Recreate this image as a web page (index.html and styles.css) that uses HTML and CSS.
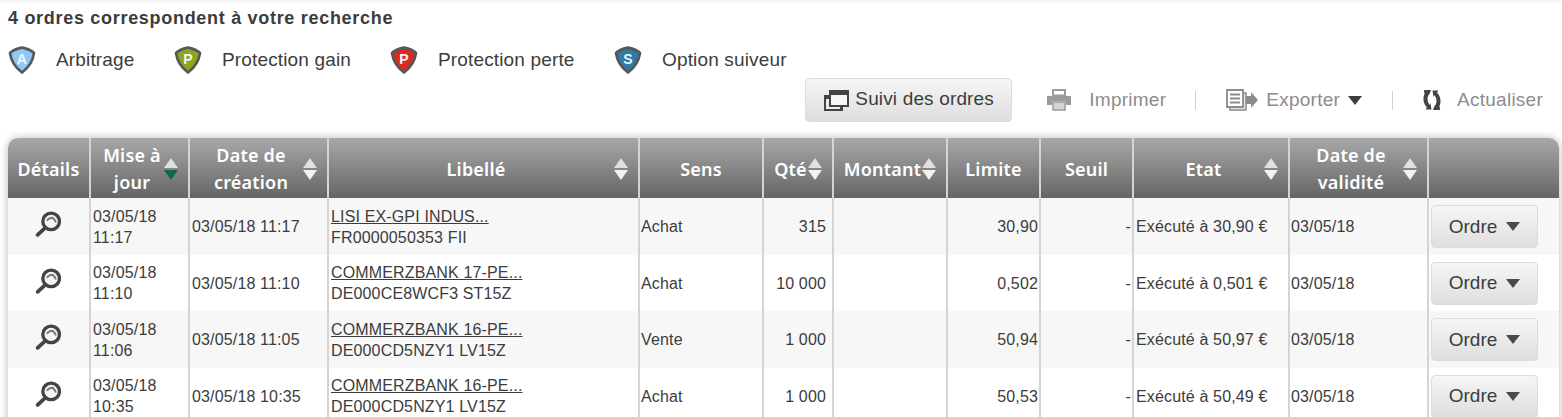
FILE: index.html
```html
<!DOCTYPE html>
<html lang="fr">
<head>
<meta charset="utf-8">
<title>Ordres</title>
<link rel="stylesheet" href="styles.css">
</head>
<body>
<svg class="defs" width="0" height="0" aria-hidden="true">
  <defs>
    <path id="shield" d="M2 8 C6 4 10 3.500 14 2.500 C18 3.500 22 4 26 8 C25 16 20 23 14 27.500 C8 23 3 16 2 8 Z"/>
    <g id="loupe">
      <circle cx="16.500" cy="10" r="8" fill="#f4f4f4" stroke="#444" stroke-width="3.200"/>
      <path d="M11 16 L3.500 23" fill="none" stroke="#444" stroke-width="3.600" stroke-linecap="round"/>
      <path d="M12.500 9.500 C13.500 7.500 15.500 6.500 18 6.500 C19.500 8 20.500 9 21 11" fill="none" stroke="#777" stroke-width="1.800"/>
    </g>
  </defs>
</svg>
<h1 class="title">4 ordres correspondent à votre recherche</h1>
<ul class="legend">
  <li class="legend-item">
    <svg class="shield" viewBox="0 0 28 30"><use href="#shield" fill="#8fc8f5" stroke="#55585c" stroke-width="2.600"/><text x="14" y="19" class="shield-letter">A</text></svg>
    <span>Arbitrage</span>
  </li>
  <li class="legend-item">
    <svg class="shield" viewBox="0 0 28 30"><use href="#shield" fill="#8aa81e" stroke="#55585c" stroke-width="2.600"/><text x="14" y="19" class="shield-letter">P</text></svg>
    <span>Protection gain</span>
  </li>
  <li class="legend-item">
    <svg class="shield" viewBox="0 0 28 30"><use href="#shield" fill="#dd2a20" stroke="#55585c" stroke-width="2.600"/><text x="14" y="19" class="shield-letter">P</text></svg>
    <span>Protection perte</span>
  </li>
  <li class="legend-item">
    <svg class="shield" viewBox="0 0 28 30"><use href="#shield" fill="#2f7ba6" stroke="#55585c" stroke-width="2.600"/><text x="14" y="19" class="shield-letter">S</text></svg>
    <span>Option suiveur</span>
  </li>
</ul>
<div class="toolbar">
  <button class="btn btn-track">
    <svg class="ico-track" viewBox="0 0 25 21"><rect x="0" y="5" width="19" height="16" fill="#444"/><rect x="2" y="9" width="14" height="10" fill="#ececec"/><rect x="5" y="0" width="20" height="17" fill="#444"/><rect x="7" y="5" width="16" height="10" fill="#f6f6f6"/></svg>
    Suivi des ordres
  </button>
  <span class="tool tool-print">
    <svg class="ico-print" viewBox="0 0 26 22"><path d="M7 1 H19 V6.500 H7 Z" fill="none" stroke="#9a9a9a" stroke-width="2"/><path d="M1 7 H25 V16 H20 V12 H6 V16 H1 Z" fill="#9a9a9a"/><path d="M7 13 H19 V21 H7 Z" fill="#d4d4d4" stroke="#9a9a9a" stroke-width="1.500"/></svg>
    <span>Imprimer</span>
  </span>
  <span class="sep sep-first"></span>
  <span class="tool tool-export">
    <svg class="ico-export" viewBox="0 0 32 22"><path d="M4 4 H20 V21 H4 Z" fill="#e4e4e4" stroke="#8c8c8c" stroke-width="1.500"/><path d="M1 1 H17 V18 H1 Z" fill="#fff" stroke="#8c8c8c" stroke-width="1.800"/><path d="M4 5.500 H14 M4 9.500 H14 M4 13.500 H14" stroke="#8c8c8c" stroke-width="1.800"/><path d="M20 7 H25 V3 L32 11 L25 19 V15 H20 Z" fill="#8c8c8c"/></svg>
    <span>Exporter</span><i class="caret"></i>
  </span>
  <span class="sep sep-last"></span>
  <span class="tool tool-refresh">
    <svg class="ico-refresh" viewBox="0 0 20 22"><path d="M2 1 L9 1 L8 4 L6 7 C5 10 5.500 13 7.500 16 L8.500 14 L9.500 20.500 L3.500 20.500 L5 18.500 C1.500 15 0.500 9 2.500 5 Z" fill="#444"/><path d="M18 21 L11 21 L12 18 L14 15 C15 12 14.500 9 12.500 6 L11.500 8 L10.500 1.500 L16.500 1.500 L15 3.500 C18.500 7 19.500 13 17.500 17 Z" fill="#444"/></svg>
    <span>Actualiser</span>
  </span>
</div>
<div class="table-wrap">
<table class="orders">
  <colgroup>
    <col class="c1"><col class="c2"><col class="c3"><col class="c4"><col class="c5"><col class="c6"><col class="c7"><col class="c8"><col class="c9"><col class="c10"><col class="c11"><col class="c12">
  </colgroup>
  <thead>
    <tr>
      <th><div class="th"><span class="th-l">Détails</span></div></th>
      <th><div class="th"><span class="th-l">Mise à jour</span><i class="sort sort-active"></i></div></th>
      <th><div class="th"><span class="th-l">Date de création</span><i class="sort"></i></div></th>
      <th><div class="th"><span class="th-l">Libellé</span><i class="sort"></i></div></th>
      <th><div class="th"><span class="th-l">Sens</span></div></th>
      <th><div class="th"><span class="th-l">Qté</span><i class="sort"></i></div></th>
      <th><div class="th"><span class="th-l">Montant</span><i class="sort"></i></div></th>
      <th><div class="th"><span class="th-l">Limite</span></div></th>
      <th><div class="th"><span class="th-l">Seuil</span></div></th>
      <th><div class="th"><span class="th-l">Etat</span><i class="sort"></i></div></th>
      <th><div class="th"><span class="th-l">Date de validité</span><i class="sort"></i></div></th>
      <th></th>
    </tr>
  </thead>
  <tbody>
    <tr>
      <td class="ctr"><svg class="loupe" viewBox="0 0 26 26"><use href="#loupe"/></svg></td>
      <td>03/05/18<br>11:17</td>
      <td>03/05/18 11:17</td>
      <td><a class="lnk">LISI EX-GPI INDUS...</a><br>FR0000050353 FII</td>
      <td class="tight">Achat</td>
      <td class="num qty">315</td>
      <td class="num"></td>
      <td class="num">30,90</td>
      <td class="num">-</td>
      <td>Exécuté à 30,90 €</td>
      <td class="tight">03/05/18</td>
      <td><button class="btn btn-ordre">Ordre<i class="caret caret-dark"></i></button></td>
    </tr>
    <tr>
      <td class="ctr"><svg class="loupe" viewBox="0 0 26 26"><use href="#loupe"/></svg></td>
      <td>03/05/18<br>11:10</td>
      <td>03/05/18 11:10</td>
      <td><a class="lnk">COMMERZBANK 17-PE...</a><br>DE000CE8WCF3 ST15Z</td>
      <td class="tight">Achat</td>
      <td class="num qty">10 000</td>
      <td class="num"></td>
      <td class="num">0,502</td>
      <td class="num">-</td>
      <td>Exécuté à 0,501 €</td>
      <td class="tight">03/05/18</td>
      <td><button class="btn btn-ordre">Ordre<i class="caret caret-dark"></i></button></td>
    </tr>
    <tr>
      <td class="ctr"><svg class="loupe" viewBox="0 0 26 26"><use href="#loupe"/></svg></td>
      <td>03/05/18<br>11:06</td>
      <td>03/05/18 11:05</td>
      <td><a class="lnk">COMMERZBANK 16-PE...</a><br>DE000CD5NZY1 LV15Z</td>
      <td class="tight">Vente</td>
      <td class="num qty">1 000</td>
      <td class="num"></td>
      <td class="num">50,94</td>
      <td class="num">-</td>
      <td>Exécuté à 50,97 €</td>
      <td class="tight">03/05/18</td>
      <td><button class="btn btn-ordre">Ordre<i class="caret caret-dark"></i></button></td>
    </tr>
    <tr>
      <td class="ctr"><svg class="loupe" viewBox="0 0 26 26"><use href="#loupe"/></svg></td>
      <td>03/05/18<br>10:35</td>
      <td>03/05/18 10:35</td>
      <td><a class="lnk">COMMERZBANK 16-PE...</a><br>DE000CD5NZY1 LV15Z</td>
      <td class="tight">Achat</td>
      <td class="num qty">1 000</td>
      <td class="num"></td>
      <td class="num">50,53</td>
      <td class="num">-</td>
      <td>Exécuté à 50,49 €</td>
      <td class="tight">03/05/18</td>
      <td><button class="btn btn-ordre">Ordre<i class="caret caret-dark"></i></button></td>
    </tr>
  </tbody>
</table>
</div>
</body>
</html>
```
FILE: styles.css
```css
html, body { margin: 0; padding: 0; height: 417px; overflow: hidden; background: #fff; }
body {
  font-family: "Liberation Sans", Arial, sans-serif;
  color: #3c3c3c;
  padding: 0 3px 0 8px;
  box-sizing: border-box;
  width: 1562px;
  background: linear-gradient(#f5f5f5, #fff 4px);
}
.defs { position: absolute; }
.title { margin: 0; padding-top: 9px; font-size: 18px; line-height: 18px; font-weight: 700; letter-spacing: .7px; color: #3c3c3c; }
.legend { list-style: none; margin: 0; padding: 0; display: flex; margin-top: 18px; height: 30px; align-items: center; }
.legend-item { display: flex; align-items: center; font-size: 19px; letter-spacing: .15px; }
.legend-item:nth-child(1) { width: 166px; }
.legend-item:nth-child(2) { width: 216px; }
.legend-item:nth-child(3) { width: 224px; }
.shield { width: 28px; height: 30px; margin-right: 20px; flex: none; }
.shield-letter { font: 700 14px "Liberation Sans", sans-serif; fill: #eef5fa; text-anchor: middle; }
.toolbar { display: flex; align-items: center; justify-content: flex-end; height: 44px; margin-top: 3px; padding-right: 16px; }
.btn { font-family: inherit; color: #3c3c3c; border: 1px solid #dcdcdc; border-radius: 4px; background: linear-gradient(#f6f6f6, #dedede); cursor: pointer; }
.btn-track { height: 44px; width: 207px; font-size: 19px; letter-spacing: .15px; display: flex; align-items: center; padding: 0 0 2px 18px; margin-right: 34px; }
.ico-track { width: 25px; height: 21px; margin-right: 6px; margin-top: 2px; }
.tool { display: flex; align-items: center; font-size: 19px; letter-spacing: .25px; color: #8c8c8c; }
.ico-print { width: 26px; height: 22px; margin-right: 17px; }
.ico-export { width: 32px; height: 22px; margin-right: 8px; }
.ico-refresh { width: 20px; height: 22px; margin-right: 15px; }
.sep { width: 1px; height: 19px; background: #d0d0d0; margin: 0 29px; }
.sep-first { margin-right: 30px; }
.sep-last { margin-left: 30px; }
.caret { display: inline-block; width: 0; height: 0; border-left: 7px solid transparent; border-right: 7px solid transparent; border-top: 9px solid #3c3c3c; margin-left: 8px; }
.caret-dark { border-top-color: #4a4a4a; margin-left: 9px; }
.table-wrap { margin-top: 16px; width: 1551px; border-radius: 10px 10px 0 0; box-shadow: 0 0 9px rgba(0, 0, 0, .28); }
.orders { width: 1551px; table-layout: fixed; border-collapse: separate; border-spacing: 0; font-size: 16px; letter-spacing: .15px; }
.c1 { width: 81px; } .c2 { width: 99px; } .c3 { width: 139px; } .c4 { width: 311px; } .c5 { width: 124px; }
.c6 { width: 70px; } .c7 { width: 114px; } .c8 { width: 93px; } .c9 { width: 93px; } .c10 { width: 156px; } .c11 { width: 139px; } .c12 { width: 132px; }
.orders th { height: 60px; padding: 0; background: linear-gradient(#a8a8aa, #656565); color: #fff; border-left: 2px solid #d4d4d4; box-sizing: border-box; }
.orders th:first-child { border-left: 0; border-top-left-radius: 10px; }
.orders th:last-child { border-top-right-radius: 10px; }
.th { display: flex; align-items: center; padding: 2px 9px 0; font-family: "Noto Sans", sans-serif; font-size: 18px; line-height: 27px; font-weight: 600; letter-spacing: .2px; }
.th-l { flex: 1; text-align: center; }
.sort { flex: none; width: 15px; height: 24px; position: relative; display: block; margin-left: 0; }
.sort::before, .sort::after { content: ""; position: absolute; left: 0; border-left: 7.500px solid transparent; border-right: 7.500px solid transparent; }
.sort::before { top: 1px; border-bottom: 10px solid #e0e0e0; }
.sort::after { bottom: 1px; border-top: 10px solid #f2f2f2; }
.sort-active::after { border-top-color: #0c6b45; }
.orders td { height: 56.500px; padding: 1px 2px 0; box-sizing: border-box; line-height: 21px; border-left: 2px solid #d4d4d4; vertical-align: middle; color: #3c3c3c; }
.orders td:first-child { border-left: 0; }
.orders td.tight { padding-left: 1px; }
.orders tbody tr:nth-child(odd) td { background: #f7f7f7; }
.num { text-align: right; }
.orders td.num { padding-right: 1px; }
.orders td.qty { padding-right: 6px; }
.ctr { text-align: center; }
.loupe { width: 27px; height: 27px; display: block; margin: 0 auto 4px; transform: translateX(-1px); }
.lnk { color: #3c3c3c; text-decoration: underline; }
.btn-ordre { width: 107px; height: 43px; font-size: 19px; letter-spacing: 0; display: flex; align-items: center; justify-content: center; padding: 0; }
```
